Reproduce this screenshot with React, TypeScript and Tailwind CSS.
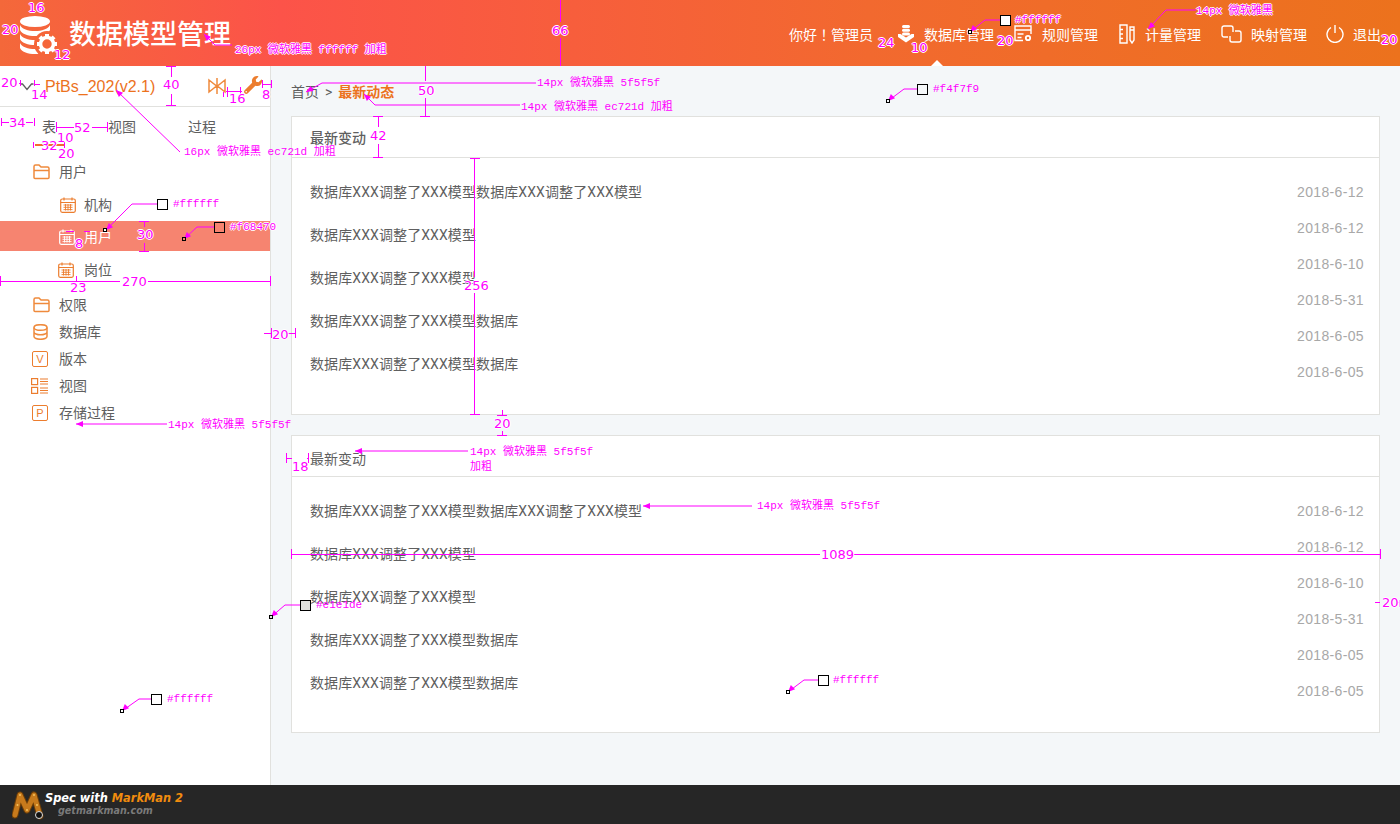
import React from "react";
import { FaWrench } from "react-icons/fa";

const CJK = "font-['Roboto','Noto_Sans_CJK_SC',sans-serif]";

function Logo() {
  const teeth = [0, 45, 90, 135, 180, 225, 270, 315];
  const band = "M0 9c2 4 8 6 15 6s13-2 15-6v5c-2 4-8 6-15 6S2 18 0 14z";
  return (
    <svg width="40" height="40" viewBox="0 0 40 40" fill="#fff">
      <ellipse cx="15" cy="5.500" rx="15" ry="5.500" />
      <path d={band} />
      <path d={band} transform="translate(0 9)" />
      <path d={band} transform="translate(0 18)" />
      <circle cx="27" cy="28" r="13" fill="#f56539" />
      <circle cx="27" cy="28" r="6.500" fill="none" stroke="#fff" strokeWidth="3.600" />
      {teeth.map((a) => (
        <rect key={a} x="25" y="18" width="4" height="4" transform={`rotate(${a} 27 28)`} />
      ))}
    </svg>
  );
}

const stroke = { fill: "none", stroke: "#fff", strokeWidth: 1.4 };

function NavIcons({ kind }: { kind: string }) {
  if (kind === "db")
    return (
      <svg width="18" height="18" viewBox="0 0 18 18" fill="#fff">
        <rect x="5" y="0" width="8" height="3" rx="1.500" />
        <rect x="5" y="3.800" width="8" height="3" rx="1.500" />
        <rect x="5" y="7.600" width="8" height="3" rx="1.500" />
        <path d="M1 9h2.500L9 12.500 14.500 9H17v3l-8 5.500L1 12z" />
      </svg>
    );
  if (kind === "rule")
    return (
      <svg width="18" height="17" viewBox="0 0 18 17" {...stroke}>
        <path d="M9 15.500H1V1h16v8" />
        <path d="M1 5h16M3.500 9h6M3.500 12.500h4" />
        <circle cx="14" cy="13" r="2.200" strokeWidth="1.800" />
      </svg>
    );
  if (kind === "measure")
    return (
      <svg width="16" height="20" viewBox="0 0 16 20" {...stroke}>
        <path d="M1 1h7v18H1zM1 5.500h3M1 10h3M1 14.500h3" />
        <path d="M11 3h4v13l-2 3-2-3zM11 6h4" />
      </svg>
    );
  if (kind === "map")
    return (
      <svg width="21" height="18" viewBox="0 0 21 18" {...stroke}>
        <path d="M7 12H3a2 2 0 0 1-2-2V3a2 2 0 0 1 2-2h7a2 2 0 0 1 2 2v4" />
        <path d="M14 6h4a2 2 0 0 1 2 2v7a2 2 0 0 1-2 2h-7a2 2 0 0 1-2-2v-4" />
      </svg>
    );
  return (
    <svg width="18" height="19" viewBox="0 0 18 19" {...stroke}>
      <path d="M9 1v8" />
      <path d="M5 3.500a8 8 0 1 0 8 0" />
    </svg>
  );
}

function NavItem({ kind, label, gapClass, active }: { kind: string; label: string; gapClass: string; active?: boolean }) {
  return (
    <div className={`relative flex items-center h-[66px] ${gapClass}`}>
      <span className="mt-[1px] flex">
        <NavIcons kind={kind} />
      </span>
      <span className="mt-[3px]">{label}</span>
      {active && (
        <span className="absolute left-[34px] bottom-0 w-0 h-0 border-l-[6px] border-r-[6px] border-b-[6px] border-l-transparent border-r-transparent border-b-white" />
      )}
    </div>
  );
}

function Header() {
  return (
    <header className="h-[66px] flex items-center text-white text-sm bg-[linear-gradient(90deg,#f4683a_0%,#fc5349_20%,#f2692f_62%,#ec721d_100%)]">
      <div className="ml-[20px] w-[40px] h-[40px] self-start mt-[16px]">
        <Logo />
      </div>
      <div className="ml-[9px] text-[27px] font-medium leading-[66px] mt-[3px]">数据模型管理</div>
      <div className="ml-auto flex items-center pr-[19px]">
        <span className="mr-[24px] mt-[3px] font-['Roboto','Noto_Sans_CJK_TC',sans-serif]">你好！管理员</span>
        <NavItem kind="db" label="数据库管理" gapClass="gap-[9px] mr-[20px]" active />
        <NavItem kind="rule" label="规则管理" gapClass="gap-[10px] mr-[21px]" />
        <NavItem kind="measure" label="计量管理" gapClass="gap-[10px] mr-[20px]" />
        <NavItem kind="map" label="映射管理" gapClass="gap-[9px] mr-[19px]" />
        <NavItem kind="power" label="退出" gapClass="gap-[9px]" />
      </div>
    </header>
  );
}

const o = { fill: "none", stroke: "#ef8a3c", strokeWidth: 1.500 };

function FolderIcon() {
  return (
    <svg width="17" height="16" viewBox="0 0 17 16" {...o} className="ml-[1px] shrink-0">
      <path d="M1 13.500V2.500A1.500 1.500 0 0 1 2.500 1H6l2 2h6.500A1.500 1.500 0 0 1 16 4.500v9a1 1 0 0 1-1 1H2a1 1 0 0 1-1-1z" />
      <path d="M1 6.500h15" />
    </svg>
  );
}
function CalIcon({ white }: { white?: boolean }) {
  const c = white ? "#fff" : "#ec7d2e";
  return (
    <svg width="16" height="16" viewBox="0 0 16 16" fill="none" stroke={c} strokeWidth="1.200" className="shrink-0">
      <rect x=".7" y="2" width="14.600" height="13.300" rx="1.500" />
      <path d="M4 .5v3M12 .5v3M.7 5.500h14.600" />
      <path d="M3.500 8h9M3.500 10.300h9M3.500 12.600h9M5.500 7v6.500M8 7v6.500M10.500 7v6.500" strokeWidth=".9" />
    </svg>
  );
}
function DbIcon() {
  return (
    <svg width="15" height="16" viewBox="0 0 15 16" {...o} className="ml-[1px] shrink-0">
      <ellipse cx="7.500" cy="3.500" rx="6.500" ry="2.800" />
      <path d="M1 3.500v9c0 1.500 3 2.800 6.500 2.800s6.500-1.300 6.500-2.800v-9M1 8c0 1.500 3 2.800 6.500 2.800S14 9.500 14 8" />
    </svg>
  );
}
function LetterBox({ ch }: { ch: string }) {
  return (
    <span className="w-[16px] h-[16px] rounded-[2px] border border-[#ec7d2e] text-[#ec7d2e] text-[11px] leading-[14px] text-center font-['Liberation_Sans',sans-serif]">
      {ch}
    </span>
  );
}
function ViewIcon() {
  return (
    <svg width="17" height="16" viewBox="0 0 17 16" fill="none" stroke="#ec7d2e" strokeWidth="1.200" className="-ml-[1px] shrink-0">
      <rect x=".6" y=".6" width="6" height="6" />
      <rect x=".6" y="9.400" width="6" height="6" />
      <path d="M9 1h8M9 3.500h8M9 6h8M9 10h8M9 12.500h8M9 15h8" />
    </svg>
  );
}

function TreeRow({ icon, label, cls, gap = "ml-[11px]" }: { icon: React.ReactNode; label: string; cls: string; gap?: string }) {
  return (
    <div className={`flex items-center pt-[2px] ${cls}`}>
      <span className="w-[16px] flex justify-start shrink-0">{icon}</span>
      <span className={gap}>{label}</span>
    </div>
  );
}

function Sidebar() {
  return (
    <aside className="w-[271px] shrink-0 bg-white border-r border-[#e1e1de] text-[#5f5f5f] text-sm">
      <div className="h-[41px] border-b border-[#e1e1de] flex items-center pl-[20px] pr-[8px]">
        <svg width="14" height="8" viewBox="0 0 14 8" fill="none" stroke="#5f5f5f" strokeWidth="1.300" className="mt-[2px]">
          <path d="M.5 1h2L7 6.500 11.500 1h2" />
        </svg>
        <span className="ml-[11px] mt-[2px] text-[16px] text-[#ec721d] font-['Liberation_Sans',sans-serif] font-normal">PtBs_202(v2.1)</span>
        <svg width="18" height="16" viewBox="0 0 18 16" fill="none" stroke="#ef8a3c" strokeWidth="1.500" className="ml-auto">
          <path d="M1 2l7.500 6L1 14zM17 2L9.500 8l7.500 6zM9 0v16" />
        </svg>
        <FaWrench className="ml-[18px] -mt-[3px] text-[#ec7d2e] w-[18px] h-[18px]" />
      </div>
      <div className="h-[38px] flex items-center pl-[42px] pt-[2px]">
        <span className="w-[28px]">表</span>
        <span className="ml-[38px] w-[56px]">视图</span>
        <span className="ml-[24px]">过程</span>
      </div>
      <div className="mt-[12px] flex flex-col">
        <TreeRow cls="pl-[32px] h-[27px]" icon={<FolderIcon />} label="用户" />
        <TreeRow cls="pl-[60px] h-[30px] mt-[5px]" gap="ml-[8px]" icon={<CalIcon />} label="机构" />
        <TreeRow cls="pl-[59px] h-[30px] mt-[2px] bg-[#f68470] text-white" gap="ml-[9px]" icon={<CalIcon white />} label="用户" />
        <TreeRow cls="pl-[58px] h-[36px]" gap="ml-[10px]" icon={<CalIcon />} label="岗位" />
        <TreeRow cls="pl-[32px] h-[27px] mt-[3px]" icon={<FolderIcon />} label="权限" />
        <TreeRow cls="pl-[32px] h-[27px]" icon={<DbIcon />} label="数据库" />
        <TreeRow cls="pl-[32px] h-[27px]" icon={<LetterBox ch="V" />} label="版本" />
        <TreeRow cls="pl-[32px] h-[27px]" icon={<ViewIcon />} label="视图" />
        <TreeRow cls="pl-[32px] h-[27px]" icon={<LetterBox ch="P" />} label="存储过程" />
      </div>
    </aside>
  );
}

const lefts = [
  "数据库XXX调整了XXX模型数据库XXX调整了XXX模型",
  "数据库XXX调整了XXX模型",
  "数据库XXX调整了XXX模型",
  "数据库XXX调整了XXX模型数据库",
  "数据库XXX调整了XXX模型数据库",
];
const dates = ["2018-6-12", "2018-6-12", "2018-6-10", "2018-5-31", "2018-6-05", "2018-6-05"];

function Card({ heightClass, titleClass }: { heightClass: string; titleClass: string }) {
  return (
    <section className={`bg-white border border-[#e1e1de] ${heightClass}`}>
      <div className={`h-[41px] flex items-center pl-[18px] border-b border-[#e1e1de] text-sm text-[#5f5f5f] ${titleClass}`}>最新变动</div>
      <div className="flex justify-between px-[18px] pr-[15px] pt-[23px]">
        <ul className="text-sm tracking-[0.1px] text-[#5f5f5f]">
          {lefts.map((t, i) => (
            <li key={i} className="h-[43px] leading-[22px]">{t}</li>
          ))}
        </ul>
        <ul className="text-sm tracking-[0.35px] text-[#a8a8a8] text-right font-['Liberation_Sans',sans-serif]">
          {dates.map((t, i) => (
            <li key={i} className="h-[36px] leading-[22px]">{t}</li>
          ))}
        </ul>
      </div>
    </section>
  );
}

function Main() {
  return (
    <main className="flex-1 bg-[#f4f7f9] pl-[20px] pr-[20px]">
      <div className="h-[50px] flex items-center pt-[2px] text-sm text-[#5f5f5f]">
        首页<span className="mx-[6px]">&gt;</span>
        <span className="text-[#ec721d] font-bold">最新动态</span>
      </div>
      <Card heightClass="h-[299px] mb-[20px]" titleClass="font-medium pt-[2px]" />
      <Card heightClass="h-[298px]" titleClass="pt-[6px]" />
    </main>
  );
}

function Footer() {
  return (
    <footer className="h-[39px] bg-[#262626] flex items-center pl-[12px] shrink-0">
      <svg width="32" height="30" viewBox="0 0 32 30">
        <path d="M3 25 L8 5 L15 20 L22 5 L28 26" fill="none" stroke="#6b3d08" strokeWidth="7" strokeLinecap="round" strokeLinejoin="round" />
        <path d="M3 25 L8 5 L15 20 L22 5 L28 26" fill="none" stroke="#c77a1c" strokeWidth="5" strokeLinecap="round" strokeLinejoin="round" />
        <path d="M8 5v0M5.500 15v0M22 5v0M25 15v0M15 20v0" stroke="#f6c35f" strokeWidth="2" strokeLinecap="round" />
        <circle cx="27" cy="25" r="3.500" fill="#111" stroke="#ddd" />
      </svg>
      <div className="ml-[1px] italic font-bold font-['DejaVu_Sans',sans-serif] leading-none">
        <div className="text-[11.400px] text-white whitespace-nowrap">
          Spec with <span className="text-[#f18c0e]">MarkMan 2</span>
        </div>
        <div className="text-[9.600px] text-[#7a7a7a] ml-[13px] mt-[2px]">getmarkman.com</div>
      </div>
    </footer>
  );
}

/* --- Measurement overlay --- */
const M = "#ff00ff";

function Lines() {
  const seg = [
    "M560 0V22M560 38V66",
    "M425 66V81M425 98V116M420 116h10",
    "M378 116V127M378 144V157M373 116h10M373 157h10",
    "M171 66V77M171 94V105M166 66h10M166 105h10",
    "M474.500 158V277M474.500 293V414M470 158h10M470 414h10",
    "M502 410v5M497 415h10M502 431v4M497 435h10",
    "M291 554H820M853 554H1380M291 549v10M1380 549v10",
    "M0 281H120M148 281H270M0 276v10M270 276v10",
    "M76 276v5",
    "M144 221V227M144 243V251M139 221h10M139 251h10",
    "M20 83h-1M35 84h5M20 80v6M34 80v6",
    "M223 92v5M226 91h16M227 87v10M240 87v10",
    "M262 84h9M262 80v8M271 80v8",
    "M1 122h8M26 122h7M1 118v8M34 118v8",
    "M56 127H74M92 127H107M56 122v10M107 122v10",
    "M56 145h8M64 142v6",
    "M66 231h8M90 231h-6",
    "M264 333h7M288 333h7M271 328v10M295 328v10",
    "M286 458h6M307 458h1M286 453v10M308 453v10",
    "M1375 602h5M1398 602h2",
  ];
  const arrows = [
    "M536 83H322L306 92",
    "M520 105H375L364 94",
    "M180 152L116 90",
    "M232 45H215L204 34",
    "M167 424H76",
    "M157 204H132L106 230",
    "M214 227H197L184 239",
    "M468 451H355",
    "M752 506H643",
    "M1000 20H985L970 32",
    "M1196 10H1166L1148 29",
    "M917 89H904L888 101",
    "M300 605H285L271 617",
    "M151 699H139L122 711",
    "M818 680H804L788 692",
  ];
  const tips: [number, number, number][] = [
    [306, 92, 150], [364, 94, 225], [116, 90, 225], [204, 34, 225], [76, 424, 180], [106, 230, 135],
    [184, 239, 135], [355, 451, 180], [643, 506, 180], [970, 32, 135], [1148, 29, 135], [888, 101, 135],
    [271, 617, 135], [122, 711, 135], [788, 692, 135],
  ];
  const dots: [number, number, string][] = [
    [105, 230, "#fff"], [184, 239, "#f68470"], [970, 32, "#fff"], [888, 101, "#f4f7f9"],
    [271, 617, "#e1e1de"], [122, 711, "#fff"], [788, 692, "#fff"],
  ];
  return (
    <svg className="absolute inset-0 pointer-events-none" width="1400" height="824" fill="none" stroke={M} strokeWidth="1" shapeRendering="crispEdges">
      {seg.map((d, i) => (
        <path key={i} d={d} />
      ))}
      <path d="M35 145h29" stroke="#f26a2f" strokeWidth="2" />
      <path d="M33 142v6M64 142v6" />
      {arrows.map((d, i) => (
        <path key={i} d={d} shapeRendering="auto" />
      ))}
      {tips.map(([x, y, r], i) => (
        <path key={i} d="M0 0L7 -3L7 3Z" fill={M} stroke="none" transform={`translate(${x} ${y}) rotate(${r - 180})`} shapeRendering="auto" />
      ))}
      {dots.map(([x, y, c], i) => (
        <rect key={i} x={x - 1.500} y={y - 1.500} width="3" height="3" fill={c} stroke="#000" />
      ))}
    </svg>
  );
}

const outline = "[text-shadow:1px_0_0_#fff,-1px_0_0_#fff,0_1px_0_#fff,0_-1px_0_#fff]";
const num = `absolute text-[13px] leading-none text-[#ff00ff] font-['DejaVu_Sans',sans-serif] ${outline}`;
const note = "absolute text-[11px] leading-none text-[#ff00ff] whitespace-nowrap font-['Liberation_Mono','Noto_Sans_CJK_SC',monospace]";
const noteW = `${note} ${outline}`;

function Swatch({ cls, fillCls }: { cls: string; fillCls: string }) {
  return <span className={`absolute w-[11px] h-[11px] border border-black ${fillCls} ${cls}`} />;
}

function Overlay() {
  return (
    <div className="absolute inset-0 pointer-events-none">
      <Lines />
      <span className={`${num} left-[28px] top-[1px]`}>16</span>
      <span className={`${num} left-[2px] top-[23px]`}>20</span>
      <span className={`${num} left-[54px] top-[48px]`}>12</span>
      <span className={`${num} left-[552px] top-[24px]`}>66</span>
      <span className={`${num} left-[878px] top-[36px]`}>24</span>
      <span className={`${num} left-[911px] top-[41px]`}>10</span>
      <span className={`${num} left-[997px] top-[34px]`}>20</span>
      <span className={`${num} left-[1381px] top-[33px]`}>20</span>
      <span className={`${num} left-[163px] top-[78px]`}>40</span>
      <span className={`${num} left-[1px] top-[76px]`}>20</span>
      <span className={`${num} left-[31px] top-[88px]`}>14</span>
      <span className={`${num} left-[229px] top-[92px]`}>16</span>
      <span className={`${num} left-[262px] top-[88px]`}>8</span>
      <span className={`${num} left-[418px] top-[84px]`}>50</span>
      <span className={`${num} left-[370px] top-[129px]`}>42</span>
      <span className={`${num} left-[9px] top-[116px]`}>34</span>
      <span className={`${num} left-[74px] top-[121px]`}>52</span>
      <span className={`${num} left-[57px] top-[131px]`}>10</span>
      <span className={`${num} left-[41px] top-[139px]`}>32</span>
      <span className={`${num} left-[58px] top-[147px]`}>20</span>
      <span className={`${num} left-[75px] top-[237px]`}>8</span>
      <span className={`${num} left-[137px] top-[228px]`}>30</span>
      <span className={`${num} left-[122px] top-[275px]`}>270</span>
      <span className={`${num} left-[70px] top-[281px]`}>23</span>
      <span className={`${num} left-[272px] top-[328px]`}>20</span>
      <span className={`${num} left-[464px] top-[279px]`}>256</span>
      <span className={`${num} left-[494px] top-[417px]`}>20</span>
      <span className={`${num} left-[292px] top-[460px]`}>18</span>
      <span className={`${num} left-[821px] top-[548px]`}>1089</span>
      <span className={`${num} left-[1382px] top-[596px]`}>20m</span>

      <span className={`${noteW} left-[235px] top-[45px]`}>26px 微软雅黑 ffffff 加粗</span>
      <span className={`${noteW} left-[1196px] top-[6px]`}>14px 微软雅黑</span>
      <span className={`${note} left-[537px] top-[78px]`}>14px 微软雅黑 5f5f5f</span>
      <span className={`${note} left-[521px] top-[102px]`}>14px 微软雅黑 ec721d 加粗</span>
      <span className={`${note} left-[184px] top-[147px]`}>16px 微软雅黑 ec721d 加粗</span>
      <span className={`${note} left-[168px] top-[420px]`}>14px 微软雅黑 5f5f5f</span>
      <span className={`${note} left-[470px] top-[447px]`}>14px 微软雅黑 5f5f5f</span>
      <span className={`${note} left-[470px] top-[462px]`}>加粗</span>
      <span className={`${note} left-[757px] top-[501px]`}>14px 微软雅黑 5f5f5f</span>

      <Swatch cls="left-[1000px] top-[15px]" fillCls="bg-white" />
      <span className={`${noteW} left-[1015px] top-[15px]`}>#ffffff</span>
      <Swatch cls="left-[917px] top-[84px]" fillCls="bg-[#f4f7f9]" />
      <span className={`${note} left-[933px] top-[84px]`}>#f4f7f9</span>
      <Swatch cls="left-[157px] top-[199px]" fillCls="bg-white" />
      <span className={`${note} left-[173px] top-[199px]`}>#ffffff</span>
      <Swatch cls="left-[214px] top-[222px]" fillCls="bg-[#f68470]" />
      <span className={`${noteW} left-[230px] top-[222px]`}>#f68470</span>
      <Swatch cls="left-[300px] top-[600px]" fillCls="bg-[#e1e1de]" />
      <span className={`${note} left-[316px] top-[600px]`}>#e1e1de</span>
      <Swatch cls="left-[151px] top-[694px]" fillCls="bg-white" />
      <span className={`${note} left-[167px] top-[694px]`}>#ffffff</span>
      <Swatch cls="left-[818px] top-[675px]" fillCls="bg-white" />
      <span className={`${note} left-[833px] top-[675px]`}>#ffffff</span>
    </div>
  );
}

export default function App() {
  return (
    <div className={`relative w-[1400px] h-[824px] overflow-hidden flex flex-col ${CJK}`}>
      <Header />
      <div className="flex flex-1 min-h-0">
        <Sidebar />
        <Main />
      </div>
      <Footer />
      <Overlay />
    </div>
  );
}
